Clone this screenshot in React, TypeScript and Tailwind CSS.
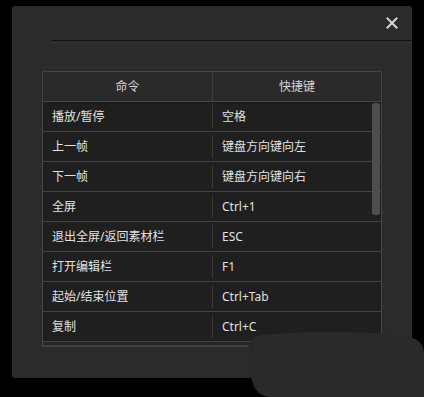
import React from "react";

const rows: [string, string][] = [
  ["播放/暂停", "空格"],
  ["上一帧", "键盘方向键向左"],
  ["下一帧", "键盘方向键向右"],
  ["全屏", "Ctrl+1"],
  ["退出全屏/返回素材栏", "ESC"],
  ["打开编辑栏", "F1"],
  ["起始/结束位置", "Ctrl+Tab"],
  ["复制", "Ctrl+C"],
];

export default function App() {
  return (
    <div
      className="relative w-[424px] h-[397px] bg-black overflow-hidden pt-[6px] pl-[12px]"
      style={{ fontFamily: '"Noto Sans", "Noto Sans CJK SC", sans-serif' }}
    >
      <div className="w-[400px] h-[372px] bg-[#2b2b2b] rounded-[3px] flex flex-col">
        <div className="h-[34px] flex justify-end items-center pr-[14px]">
          <svg width="12" height="12" viewBox="0 0 12 12">
            <path d="M1.5 1.5 L10.5 10.5 M10.5 1.5 L1.5 10.5" stroke="#d4d4d4" strokeWidth="2" strokeLinecap="square" />
          </svg>
        </div>
        <div className="ml-[40px] h-px bg-[#111111]" />
        <div className="ml-[40px] h-[2px] bg-[#2e2e2e]" />
        <div className="ml-[40px] h-px bg-[#323232]" />
        <div className="ml-[30px] mt-[23px] w-[340px] h-px bg-[#313131]" />
        <div className="ml-[30px] mt-[3px] w-[340px] border border-[#444444] text-[12px]">
          <div className="h-[30px] flex bg-[#2a2a2a] border-b border-[#444444] text-[#d6d6d6]">
            <div className="w-[169px] flex items-center justify-center">命令</div>
            <div className="flex-1 flex items-center justify-center border-l border-[#3e3e3e]">快捷键</div>
          </div>
          <div className="relative">
            {rows.map(([cmd, key]) => (
              <div key={cmd} className="h-[30px] flex bg-[#1f1f1f] border-b border-[#424242] text-[#e0e0e0]">
                <div className="w-[169px] flex items-center pl-[9px]">{cmd}</div>
                <div className="flex-1 flex items-center pl-[9px] my-[3px] border-l border-[#3a3a3a]">{key}</div>
              </div>
            ))}
            <div className="absolute right-[1px] top-[1px] w-[8px] h-[112px] rounded-[3px] bg-[#4e4e4e]" />
          </div>
          <div className="h-[4px] bg-[#262626] border-b border-[#3a3a3a]" />
        </div>
      </div>
      <svg className="absolute left-0 top-0" width="424" height="397" viewBox="0 0 424 397">
        <path
          d="M262 335 C 300 331, 360 331, 400 335 C 418 337, 424 344, 424 354 L 424 397 L 272 397 C 260 397, 254 390, 252 380 C 250 372, 246 366, 247 356 C 248 343, 252 337, 262 335 Z"
          fill="#2a2a2a"
        />
      </svg>
    </div>
  );
}
